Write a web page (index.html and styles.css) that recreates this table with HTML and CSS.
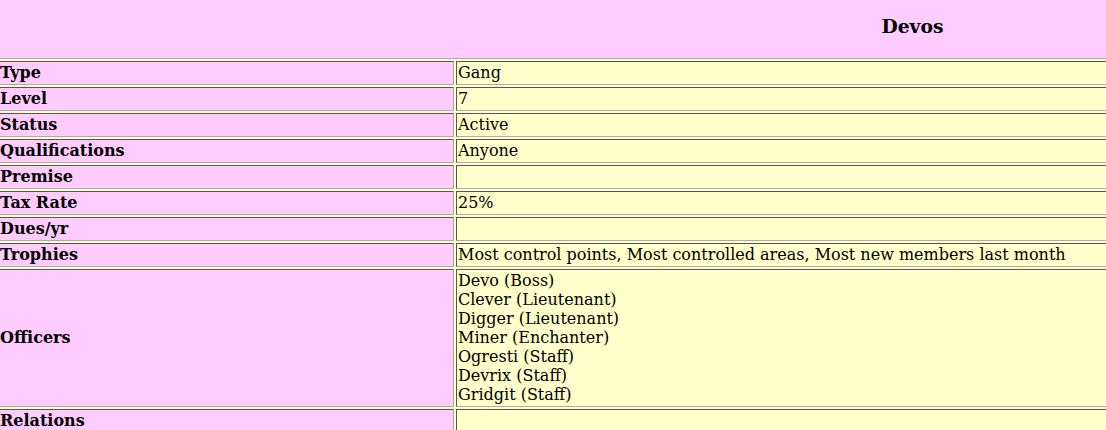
FILE: index.html
```html
<!DOCTYPE html>
<html>
<head>
<meta charset="utf-8">
<title>Devos</title>
<link rel="stylesheet" href="styles.css">
</head>
<body>
<table class="sheet">
  <colgroup><col class="c-label"><col class="c-value"></colgroup>
  <tr><th class="head" colspan="2"><h3 class="title">Devos</h3></th></tr>
  <tr><th class="label">Type</th><td class="value">Gang</td></tr>
  <tr><th class="label">Level</th><td class="value">7</td></tr>
  <tr><th class="label">Status</th><td class="value">Active</td></tr>
  <tr><th class="label">Qualifications</th><td class="value">Anyone</td></tr>
  <tr><th class="label">Premise</th><td class="value"></td></tr>
  <tr><th class="label">Tax Rate</th><td class="value">25%</td></tr>
  <tr><th class="label">Dues/yr</th><td class="value"></td></tr>
  <tr><th class="label">Trophies</th><td class="value">Most control points, Most controlled areas, Most new members last month</td></tr>
  <tr><th class="label">Officers</th><td class="value">Devo (Boss)<br>Clever (Lieutenant)<br>Digger (Lieutenant)<br>Miner (Enchanter)<br>Ogresti (Staff)<br>Devrix (Staff)<br>Gridgit (Staff)</td></tr>
  <tr><th class="label">Relations</th><td class="value"></td></tr>
</table>
</body>
</html>
```
FILE: styles.css
```css
html, body {
  margin: 0;
  padding: 0;
  background: #ffffcc;
  overflow: hidden;
}
body {
  font-family: "DejaVu Serif", serif;
  font-size: 16px;
  color: #000;
}
.sheet {
  table-layout: fixed;
  border-collapse: separate;
  border-spacing: 2px;
  width: 1833px;
  margin: -3px 0 0 -4px;
}
.c-label { width: 456px; }
.sheet th,
.sheet td {
  box-sizing: border-box;
  border: 1px solid;
  border-color: #555555 #aaaaaa #aaaaaa #555555;
  padding: 1px 1px 2px 1px;
  line-height: 19px;
  vertical-align: middle;
}
.sheet .head {
  background: #ffccff;
  padding: 1px;
  text-align: center;
}
.title {
  margin: 0;
  padding: 14px 0 20px;
  font-size: 18.72px;
  line-height: 22px;
  font-weight: bold;
}
.sheet .label {
  background: #ffccff;
  text-align: left;
  font-weight: bold;
}
.sheet .value {
  background: #ffffcc;
  text-align: left;
}
```
